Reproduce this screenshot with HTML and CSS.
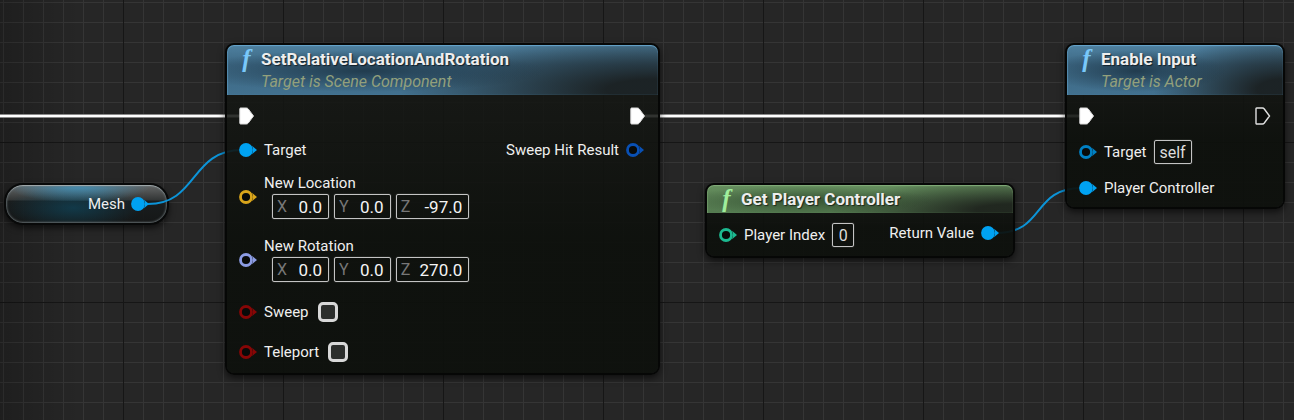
FILE: index.html
```html
<!DOCTYPE html>
<html lang="en">
<head>
<meta charset="utf-8">
<title>Event Graph</title>
<link rel="stylesheet" href="styles.css">
</head>
<body>
<svg class="symbols" aria-hidden="true">
  <defs>
    <symbol id="pin-open" viewBox="0 0 18 14"><circle cx="7" cy="7" r="5.5" fill="#080a09" stroke="currentColor" stroke-width="2.8"/><path d="M13 2.800 18 7l-5 4.200Q15 7 13 2.800Z" fill="currentColor"/></symbol>
    <symbol id="pin-full" viewBox="0 0 18 14"><circle cx="7" cy="7" r="6.900" fill="currentColor"/><path d="M13 2.800 18 7l-5 4.200Q15 7 13 2.800Z" fill="currentColor"/></symbol>
    <symbol id="exec-full" viewBox="0 0 16 18"><path d="M1.500 1H7.500Q8.500 1 9.300 2L14.500 9 9.300 16Q8.500 17 7.500 17H1.500Q.8 17 .8 16V2Q.8 1 1.500 1Z" fill="#fff" stroke="#ddd"/></symbol>
    <symbol id="exec-open" viewBox="0 0 16 18"><path d="M1.700 1H7.500Q8.500 1 9.300 2L14.500 9 9.300 16Q8.500 17 7.500 17H1.700Q1 17 1 16V2Q1 1 1.700 1Z" fill="#0a0c0a" stroke="#e0e0e0" stroke-width="1.400"/></symbol>
  </defs>
</svg>
<main class="graph">
  <section class="variable">
    <span>Mesh</span><svg class="pin object-pin"><use href="#pin-full"/></svg>
  </section>

  <svg class="wires" aria-hidden="true">
    <path class="wire exec-edge" d="M0 116H240M644 116H1080"/>
    <path class="wire exec" d="M0 116H240M644 116H1080"/>
    <path class="wire object" d="M148 204C198 204 190 150 242 150"/>
    <path class="wire object" d="M996 233C1046 233 1031 188 1082 188"/>
  </svg>

  <section class="node set-transform">
    <header class="head blue">
      <span class="func" aria-hidden="true">f</span>
      <div><h2 class="title">SetRelativeLocationAndRotation</h2><p class="subtitle">Target is Scene Component</p></div>
    </header>
    <div class="body">
      <div class="pins">
        <div class="row"><svg class="exec-pin"><use href="#exec-full"/></svg></div>
        <div class="row"><svg class="pin object-pin"><use href="#pin-full"/></svg><span>Target</span></div>
        <div class="row vector-row">
          <svg class="pin vector-pin"><use href="#pin-open"/></svg>
          <fieldset class="vector">
            <legend>New Location</legend>
            <div class="fields">
              <label class="field">X<input class="number" value="0.0"></label>
              <label class="field">Y<input class="number" value="0.0"></label>
              <label class="field">Z<input class="number wide" value="-97.0"></label>
            </div>
          </fieldset>
        </div>
        <div class="row vector-row">
          <svg class="pin rotator-pin"><use href="#pin-open"/></svg>
          <fieldset class="vector">
            <legend>New Rotation</legend>
            <div class="fields">
              <label class="field">X<input class="number" value="0.0"></label>
              <label class="field">Y<input class="number" value="0.0"></label>
              <label class="field">Z<input class="number wide" value="270.0"></label>
            </div>
          </fieldset>
        </div>
        <div class="row check-row"><svg class="pin bool-pin"><use href="#pin-open"/></svg><label for="sweep">Sweep</label><input class="check" type="checkbox" id="sweep"></div>
        <div class="row check-row"><svg class="pin bool-pin"><use href="#pin-open"/></svg><label for="teleport">Teleport</label><input class="check" type="checkbox" id="teleport"></div>
      </div>
      <div class="pins out">
        <div class="row"><svg class="exec-pin"><use href="#exec-full"/></svg></div>
        <div class="row"><span>Sweep Hit Result</span><svg class="pin struct-pin"><use href="#pin-open"/></svg></div>
      </div>
    </div>
  </section>

  <section class="node get-controller">
    <header class="head green">
      <span class="func" aria-hidden="true">f</span>
      <h2 class="title">Get Player Controller</h2>
    </header>
    <div class="body compact">
      <div class="pins">
        <div class="row"><svg class="pin int-pin"><use href="#pin-open"/></svg><label for="index">Player Index</label><input class="value index" id="index" value="0"></div>
      </div>
      <div class="pins out">
        <div class="row"><span>Return Value</span><svg class="pin object-pin"><use href="#pin-full"/></svg></div>
      </div>
    </div>
  </section>

  <section class="node enable-input">
    <header class="head blue">
      <span class="func" aria-hidden="true">f</span>
      <div><h2 class="title">Enable Input</h2><p class="subtitle">Target is Actor</p></div>
    </header>
    <div class="body">
      <div class="pins">
        <div class="row"><svg class="exec-pin"><use href="#exec-full"/></svg></div>
        <div class="row"><svg class="pin target-pin"><use href="#pin-open"/></svg><label for="target">Target</label><input class="value self" id="target" value="self"></div>
        <div class="row"><svg class="pin object-pin"><use href="#pin-full"/></svg><span>Player Controller</span></div>
      </div>
      <div class="pins out">
        <div class="row"><svg class="exec-pin"><use href="#exec-open"/></svg></div>
      </div>
    </div>
  </section>
</main>
</body>
</html>
```

FILE: styles.css
```css
* { box-sizing: border-box; }

body {
  margin: 0;
  background: #262626;
  color: #efefef;
  font: 15px/20px Roboto, "Liberation Sans", sans-serif;
}

.symbols { position: absolute; width: 0; height: 0; }

.graph {
  position: relative;
  min-height: 100vh;
  overflow: hidden;
  background:
    linear-gradient(90deg, rgba(0, 0, 0, .2), transparent 80px),
    linear-gradient(90deg, #161616 1px, transparent 1px) 123px 0 / 160px 160px,
    linear-gradient(#161616 1px, transparent 1px) 0 142px / 160px 160px,
    linear-gradient(90deg, #353535 1px, transparent 1px) 3px 0 / 20px 20px,
    linear-gradient(#353535 1px, transparent 1px) 0 2px / 20px 20px,
    #262626;
}

.wires { position: absolute; inset: 0; width: 100%; height: 100%; }
.wire { fill: none; }
.wire.exec-edge { stroke: #8a8a8a; stroke-width: 4px; }
.wire.exec { stroke: #fff; stroke-width: 2px; }
.wire.object { stroke: #0c94d8; stroke-width: 2px; }

/* Nodes */
.node {
  position: absolute;
  border: 2px solid #060706;
  border-radius: 9px;
  background: linear-gradient(rgba(22, 24, 21, .84), rgba(13, 16, 12, .93) 60%);
  background-clip: padding-box;
  box-shadow: 0 3px 7px rgba(0, 0, 0, .6);
}
.set-transform { left: 225px; top: 43px; width: 435px; }
.get-controller { left: 705px; top: 183px; width: 310px; }
.enable-input { left: 1065px; top: 43px; width: 220px; }

.head {
  display: flex;
  gap: 7px;
  padding: 5px 12px 0;
  border-radius: 7px 7px 0 0;
}
.blue {
  height: 50px;
  background:
    radial-gradient(ellipse 42% 42% at 32% 52%, rgba(24, 45, 60, .75), transparent),
    radial-gradient(ellipse 60% 110% at 100% 90%, rgba(26, 31, 32, .95) 20%, transparent),
    linear-gradient(#4e809f, #3d6884 40%, #42718f);
  box-shadow: inset 0 1px 1px #67a5cb, inset 1px 0 1px #538bad;
}
.green {
  height: 28px;
  background:
    radial-gradient(ellipse 42% 50% at 32% 55%, rgba(34, 56, 32, .65), transparent),
    radial-gradient(ellipse 60% 110% at 100% 90%, rgba(30, 35, 29, .95) 20%, transparent),
    linear-gradient(#648d5d, #547a50);
  box-shadow: inset 0 1px 1px #82ac79, inset 1px 0 1px #6c9464;
}
.func {
  width: 15px;
  text-align: center;
  color: #79c8fa;
  font: italic bold 25px/18px "Liberation Serif", serif;
}
.green .func { color: #a0ee9c; }
.title {
  margin: 0;
  color: #eee;
  font-size: 17px;
  font-weight: 700;
  line-height: 19px;
  text-shadow: 1px 1px 1px rgba(0, 0, 0, .6);
}
.subtitle { margin: 3px 0 0; color: #93a07c; font-size: 16px; font-style: italic; }

.body {
  display: flex;
  justify-content: space-between;
  padding: 11px 12px 9px;
}
.compact { padding-top: 10px; }
.pins { display: flex; flex-direction: column; gap: 14px; }
.out { align-items: flex-end; }
.row { display: flex; align-items: center; gap: 7px; min-height: 20px; }
.out .pin { margin-right: 2px; }
.vector-row { margin-bottom: 4px; }
.check-row { min-height: 24px; margin-bottom: 2px; }
.check-row:last-child { margin-bottom: 0; }

/* Pins */
.pin { flex: none; width: 18px; height: 14px; }
.exec-pin { flex: none; width: 16px; height: 18px; }
.object-pin { color: #00a2f2; }
.target-pin { color: #0080c4; }
.vector-pin { color: #d9a51b; }
.rotator-pin { color: #8c9ce4; }
.bool-pin { color: #870606; }
.struct-pin { color: #0950b4; }
.int-pin { color: #1cb990; }

/* Values */
.vector { margin: 0; padding: 0; border: 0; min-width: 0; }
.vector legend { padding: 0; line-height: 18px; }
.fields { display: flex; gap: 5px; padding: 2px 0 0 8px; }
.field {
  display: flex;
  align-items: center;
  justify-content: space-between;
  height: 25px;
  padding: 0 6px 0 4px;
  border: 1px solid #c4c4c4;
  border-radius: 2px;
  box-shadow: 0 0 1px #aaa;
  color: #777;
  font-size: 16px;
}
.number {
  width: 35px;
  padding: 0;
  border: 0;
  outline: 0;
  background: none;
  color: #f4f4f4;
  font: inherit;
  font-size: 17px;
  text-align: right;
}
.number.wide { width: 52px; }
.value {
  height: 24px;
  padding: 0;
  border: 1px solid #c4c4c4;
  border-radius: 2px;
  box-shadow: 0 0 1px #aaa;
  background: none;
  color: #ddd;
  font: inherit;
  font-size: 16px;
  text-align: center;
}
.index { width: 22px; }
.self { width: 38px; }
.check {
  appearance: none;
  width: 20px;
  height: 20px;
  margin: 0 0 0 2px;
  border: 3px solid #d8d8d8;
  border-radius: 5px;
  background: #2c2e2c;
}

/* Variable getter */
.variable {
  position: absolute;
  left: 4px;
  top: 183px;
  width: 165px;
  height: 42px;
  display: flex;
  align-items: center;
  justify-content: flex-end;
  gap: 6px;
  padding: 0 18px;
  border: 2px solid #080909;
  border-radius: 19px;
  background:
    radial-gradient(ellipse 45% 110% at 45% 0, rgba(65, 155, 200, .85), transparent) 0 0 / 100% 16px no-repeat,
    radial-gradient(ellipse 42% 60% at 42% 60%, rgba(15, 70, 92, .7), transparent),
    linear-gradient(rgba(105, 107, 107, .95), rgba(52, 55, 55, .9) 15px, rgba(24, 28, 29, .9) 16px, rgba(20, 22, 22, .92));
  box-shadow: inset 0 2px 1px -1px #a5adb0, inset 0 0 2px 1px #60686b, 0 3px 6px rgba(0, 0, 0, .6);
}
```
